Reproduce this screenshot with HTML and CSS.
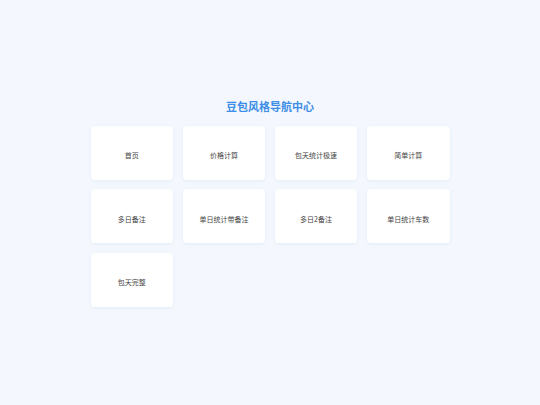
FILE: index.html
```html
<!DOCTYPE html>
<html lang="zh">
<head>
<meta charset="utf-8">
<link rel="stylesheet" href="styles.css">
</head>
<body>
<main class="page">
  <h1 class="title">豆包风格导航中心</h1>
  <div class="grid">
    <a class="card">首页</a>
    <a class="card">价格计算</a>
    <a class="card">包天统计极速</a>
    <a class="card">简单计算</a>
    <a class="card">多日备注</a>
    <a class="card">单日统计带备注</a>
    <a class="card">多日2备注</a>
    <a class="card">单日统计车数</a>
    <a class="card">包天完整</a>
  </div>
</main>
</body>
</html>
```
FILE: styles.css
```css
html, body {
  margin: 0;
  padding: 0;
  height: 100%;
}
body {
  background: #f4f8fe;
  font-family: "Noto Sans CJK SC", "Noto Sans", sans-serif;
}
.page {
  height: 100%;
  display: flex;
  flex-direction: column;
  align-items: center;
  justify-content: center;
}
.title {
  margin: 0 0 13px;
  font-size: 11px;
  line-height: 14px;
  font-weight: 700;
  color: #3d8ee6;
}
.grid {
  width: 359px;
  display: grid;
  grid-template-columns: repeat(4, 1fr);
  gap: 9.5px;
}
.card {
  box-sizing: border-box;
  height: 54px;
  padding-top: 5px;
  background: #ffffff;
  border-radius: 4px;
  box-shadow: 0 1px 4px rgba(60, 100, 160, 0.08);
  display: flex;
  align-items: center;
  justify-content: center;
  font-size: 7px;
  color: #444;
}
```
